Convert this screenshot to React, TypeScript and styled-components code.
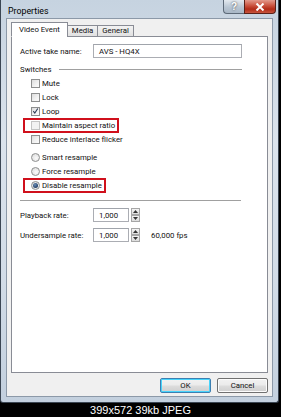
import React from 'react';
import styled, { createGlobalStyle } from 'styled-components';

const GlobalStyle = createGlobalStyle`
  html, body {
    margin: 0;
    padding: 0;
    background: #000;
  }
  body {
    font-family: Roboto, 'Noto Sans', sans-serif;
    font-size: 7.8px;
    color: #111;
  }
`;

const switches = [
  { label: 'Mute', checked: false },
  { label: 'Lock', checked: false },
  { label: 'Loop', checked: true },
  { label: 'Maintain aspect ratio', checked: false, disabled: true, marked: true },
  { label: 'Reduce interlace flicker', checked: false },
];

const resamples = [
  { label: 'Smart resample', selected: false },
  { label: 'Force resample', selected: false },
  { label: 'Disable resample', selected: true, marked: true },
];

const CheckMark = () => (
  <svg width="8" height="8" viewBox="0 0 8 8">
    <path d="M1.5 4.2 L3.2 6.3 L6.6 1.2" fill="none" stroke="#2a3a55" strokeWidth="1.2" />
  </svg>
);

const Spinner = () => (
  <SpinBox>
    <SpinHalf>
      <svg width="5" height="3" viewBox="0 0 5 3">
        <path d="M0 3 L2.5 0 L5 3 Z" fill="#333" />
      </svg>
    </SpinHalf>
    <SpinHalf>
      <svg width="5" height="3" viewBox="0 0 5 3">
        <path d="M0 0 L2.5 3 L5 0 Z" fill="#333" />
      </svg>
    </SpinHalf>
  </SpinBox>
);

const App = () => {
  return (
    <Page>
      <GlobalStyle />
      <Window>
        <TitleBar>
          <Title>Properties</Title>
          <Controls>
            <HelpButton>?</HelpButton>
            <CloseButton>
              <svg width="10" height="8" viewBox="0 0 10 8">
                <path d="M1.5 0.5 L8.5 7.5 M8.5 0.5 L1.5 7.5" stroke="#fff" strokeWidth="2" />
              </svg>
            </CloseButton>
          </Controls>
        </TitleBar>
        <Client>
          <Tabs>
            <Tab $active>Video Event</Tab>
            <Tab>Media</Tab>
            <Tab>General</Tab>
          </Tabs>
          <Panel>
            <FieldRow>
              <Label>Active take name:</Label>
              <TextInput $width={149}>AVS - HQ4X</TextInput>
            </FieldRow>
            <GroupHeader>
              <span>Switches</span>
              <Rule />
            </GroupHeader>
            <CheckList>
              {switches.map((s) => (
                <OptionRow key={s.label} $marked={s.marked}>
                  <CheckBox $disabled={s.disabled}>{s.checked && <CheckMark />}</CheckBox>
                  <span>{s.label}</span>
                </OptionRow>
              ))}
            </CheckList>
            <RadioList>
              {resamples.map((r) => (
                <OptionRow key={r.label} $marked={r.marked}>
                  <Radio>{r.selected && <RadioDot />}</Radio>
                  <span>{r.label}</span>
                </OptionRow>
              ))}
            </RadioList>
            <Separator />
            <RateRow>
              <Label>Playback rate:</Label>
              <TextInput $width={36}>1,000</TextInput>
              <Spinner />
            </RateRow>
            <RateRow>
              <Label>Undersample rate:</Label>
              <TextInput $width={36}>1,000</TextInput>
              <Spinner />
              <Fps>60,000 fps</Fps>
            </RateRow>
          </Panel>
          <ButtonRow>
            <Button $default>OK</Button>
            <Button>Cancel</Button>
          </ButtonRow>
        </Client>
      </Window>
      <Caption>399x572 39kb JPEG</Caption>
    </Page>
  );
};

export default App;

const Page = styled.div`
  width: 281px;
  height: 417px;
  background: #000;
  display: flex;
  flex-direction: column;
  overflow: hidden;
`;

const Window = styled.div`
  width: 267px;
  height: 397px;
  box-sizing: content-box;
  border: 1px solid #3b4653;
  border-top: none;
  border-radius: 0 0 3px 3px;
  background: linear-gradient(180deg, #c6d3e0 0%, #dbe3ec 35%, #d2dce7 70%, #c3d0de 100%);
  display: flex;
  flex-direction: column;
  padding: 0 5px 5px 5px;
`;

const TitleBar = styled.div`
  height: 22px;
  display: flex;
  align-items: flex-start;
  justify-content: space-between;
`;

const Title = styled.div`
  margin: 6px 0 0 2px;
  font-size: 8.8px;
  color: #000;
`;

const Controls = styled.div`
  display: flex;
  margin-right: -3px;
`;

const HelpButton = styled.div`
  width: 21px;
  height: 14px;
  box-sizing: border-box;
  border: 1px solid #5d6a78;
  border-top: none;
  border-right: none;
  border-radius: 0 0 0 4px;
  background: linear-gradient(180deg, #e3e9ef 0%, #b9c6d3 55%, #a9b7c6 100%);
  color: #fff;
  font: bold 10px 'Liberation Sans', sans-serif;
  text-shadow: 0 0 2px #333;
  display: flex;
  align-items: center;
  justify-content: center;
`;

const CloseButton = styled.div`
  width: 32px;
  height: 14px;
  box-sizing: border-box;
  border: 1px solid #5a2119;
  border-top: none;
  border-radius: 0 0 4px 0;
  background: linear-gradient(180deg, #e39a8c 0%, #c9503c 45%, #b22c18 70%, #c8553d 100%);
  display: flex;
  align-items: center;
  justify-content: center;
`;

const Client = styled.div`
  flex: 1;
  background: #f0f0f0;
  border: 1px solid #8c99a8;
  display: flex;
  flex-direction: column;
  padding: 3px 4px 3px 4px;
`;

const Tabs = styled.div`
  display: flex;
  align-items: flex-end;
  height: 15px;
  position: relative;
  z-index: 1;
  margin-bottom: -1px;
`;

const Tab = styled.div<{ $active?: boolean }>`
  height: ${({ $active }) => ($active ? 15 : 12)}px;
  box-sizing: border-box;
  padding: 0 ${({ $active }) => ($active ? 7 : 4)}px;
  margin-left: ${({ $active }) => ($active ? 0 : -1)}px;
  border: 1px solid #898c95;
  border-bottom: ${({ $active }) => ($active ? '1px solid #fff' : '1px solid #898c95')};
  background: ${({ $active }) => ($active ? '#fff' : 'linear-gradient(180deg, #f3f3f3, #e1e1e1)')};
  display: flex;
  align-items: center;
  line-height: 1;
`;

const Panel = styled.div`
  height: 329px;
  background: #fff;
  border: 1px solid #898c95;
  padding: 6px 0 0 8px;
  display: flex;
  flex-direction: column;
`;

const FieldRow = styled.div`
  display: flex;
  align-items: center;
  height: 16px;
`;

const Label = styled.div`
  width: 73px;
  white-space: nowrap;
`;

const TextInput = styled.div<{ $width: number }>`
  width: ${({ $width }) => $width}px;
  height: 14px;
  box-sizing: border-box;
  border: 1px solid #abadb3;
  border-top-color: #a0a4ab;
  padding-left: 5px;
  display: flex;
  align-items: center;
  background: #fff;
`;

const GroupHeader = styled.div`
  display: flex;
  align-items: center;
  margin-top: 4px;
  height: 12px;
  gap: 8px;
`;

const Rule = styled.div`
  width: 183px;
  height: 1px;
  background: #a0a0a0;
`;

const CheckList = styled.div`
  display: flex;
  flex-direction: column;
  margin-top: 1px;
  padding-left: 11px;
`;

const RadioList = styled(CheckList)`
  margin-top: 4px;
`;

const OptionRow = styled.div<{ $marked?: boolean }>`
  position: relative;
  display: flex;
  align-items: center;
  gap: 2px;
  height: 14px;
  align-self: flex-start;

  &::before {
    content: '';
    display: ${({ $marked }) => ($marked ? 'block' : 'none')};
    position: absolute;
    left: -8px;
    right: -4px;
    top: 0;
    bottom: -1px;
    border: 2px solid #d0101c;
  }
`;

const CheckBox = styled.div<{ $disabled?: boolean }>`
  width: 9px;
  height: 9px;
  box-sizing: border-box;
  border: 1px solid ${({ $disabled }) => ($disabled ? '#c4c4c4' : '#8e8f8f')};
  background: ${({ $disabled }) =>
    $disabled ? '#f2f2f2' : 'linear-gradient(135deg, #dcdcdc 0%, #f2f2f2 60%, #fbfbfb 100%)'};
  display: flex;
  align-items: center;
  justify-content: center;
`;

const Radio = styled.div`
  width: 9px;
  height: 9px;
  box-sizing: border-box;
  border-radius: 50%;
  border: 1px solid #8e8f8f;
  background: radial-gradient(circle at 60% 60%, #fafafa 0%, #d9d9d9 100%);
  display: flex;
  align-items: center;
  justify-content: center;
`;

const RadioDot = styled.div`
  width: 5px;
  height: 5px;
  border-radius: 50%;
  background: radial-gradient(circle at 40% 35%, #6c8fb8 0%, #1c355a 80%);
`;

const Separator = styled.div`
  width: 221px;
  height: 1px;
  background: #a0a0a0;
  margin-top: 8px;
`;

const RateRow = styled.div`
  display: flex;
  align-items: center;
  margin-top: 7px;
  height: 14px;

  & + & {
    margin-top: 6px;
  }
`;

const SpinBox = styled.div`
  width: 9px;
  height: 14px;
  margin-left: 2px;
  display: flex;
  flex-direction: column;
`;

const SpinHalf = styled.div`
  flex: 1;
  box-sizing: border-box;
  border: 1px solid #a6a6a6;
  background: linear-gradient(180deg, #f4f4f4, #dcdcdc);
  display: flex;
  align-items: center;
  justify-content: center;
`;

const Fps = styled.div`
  margin-left: 11px;
`;

const ButtonRow = styled.div`
  display: flex;
  justify-content: flex-end;
  gap: 6px;
  margin-top: 5px;
`;

const Button = styled.div<{ $default?: boolean }>`
  width: 51px;
  height: 15px;
  box-sizing: border-box;
  border: 1px solid ${({ $default }) => ($default ? '#3c7fb1' : '#707070')};
  border-radius: 2px;
  background: linear-gradient(180deg, #f2f2f2 0%, #ebebeb 48%, #dddddd 52%, #cfcfcf 100%);
  box-shadow: ${({ $default }) => ($default ? 'inset 0 0 0 1px #48d4fb' : 'inset 0 0 0 1px #fcfcfc')};
  display: flex;
  align-items: center;
  justify-content: center;
`;

const Caption = styled.div`
  flex: 1;
  display: flex;
  align-items: center;
  justify-content: center;
  color: #fff;
  font: 11px 'Liberation Sans', Arial, sans-serif;
`;
